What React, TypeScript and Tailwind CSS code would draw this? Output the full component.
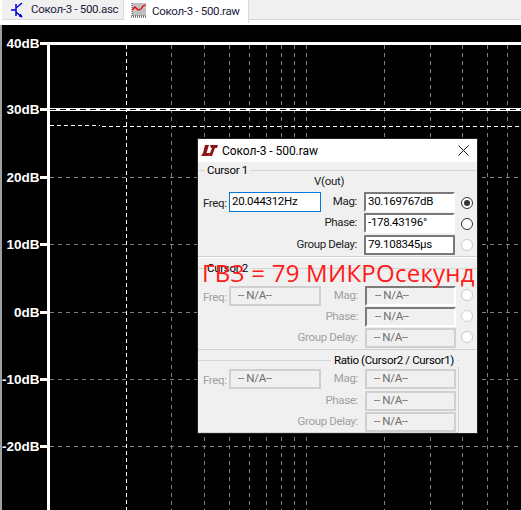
const uiFont = "[font-family:'Roboto','Noto_Sans',sans-serif]";

const gridX = [171, 204, 229, 249, 266, 281, 294, 306, 384, 430, 462, 487, 507];
const gridY = [177, 244, 312, 379, 446];
const axis = [
  { label: "40dB", y: 43 },
  { label: "30dB", y: 109 },
  { label: "20dB", y: 177 },
  { label: "10dB", y: 244 },
  { label: "0dB", y: 312 },
  { label: "-10dB", y: 379 },
  { label: "-20dB", y: 446 },
  { label: "-30dB", y: 514 },
];

function Chart() {
  return (
    <svg width="521" height="485" viewBox="0 25 521 485" className="block" shapeRendering="crispEdges">
      <rect x="0" y="25" width="521" height="485" fill="#000" />
      <rect x="0" y="25" width="2" height="485" fill="#a0a0a0" />
      {gridX.map((x) => (
        <line key={x} x1={x + 0.5} x2={x + 0.5} y1="45" y2="510" stroke="#808080" strokeDasharray="4 4" />
      ))}
      {gridY.map((y) => (
        <line key={y} x1="50" x2="521" y1={y + 0.5} y2={y + 0.5} stroke="#808080" strokeDasharray="4 4" />
      ))}
      <line x1="126.5" x2="126.5" y1="45" y2="510" stroke="#fff" strokeDasharray="4 3" />
      <rect x="47" y="42" width="474" height="3" fill="#fff" />
      <rect x="47" y="42" width="3" height="468" fill="#fff" />
      {/* cursor lines */}
      <rect x="50" y="108" width="471" height="3" fill="#fff" />
      <line x1="50" x2="521" y1="109.5" y2="109.5" stroke="#000" strokeDasharray="6 4" />
      <line x1="50" x2="100" y1="125.5" y2="125.5" stroke="#fff" strokeDasharray="4 3" />
      <line x1="102" x2="521" y1="126.5" y2="126.5" stroke="#fff" strokeDasharray="4 3" />
      {axis.map((a) => (
        <g key={a.label}>
          <rect x="40" y={a.y - 1} width="7" height="3" fill="#fff" />
          <text
            x="39.5"
            y={a.y + 5}
            textAnchor="end"
            fill="#fff"
            fontSize="13.5"
            fontWeight="700"
            fontFamily="'Liberation Sans', sans-serif"
            shapeRendering="auto"
          >
            {a.label}
          </text>
        </g>
      ))}
    </svg>
  );
}

function Tabs() {
  return (
    <div className={`flex h-[25px] bg-white pl-[2px] text-[11.5px] tracking-[-0.3px] whitespace-nowrap text-[#1a1a3a] ${uiFont}`}>
      <div className="flex h-[20px] w-[122px] items-center gap-[6px] border-r border-b border-[#d9d9d9] bg-[#f0f0f0] pl-[9px]">
        <svg width="14" height="16" viewBox="0 0 14 16" fill="none" stroke="#0000e0" strokeWidth="1.5" className="shrink-0">
          <path d="M0 8h5M5 2v12M5 6l6-5M5 10l6 5" />
          <path d="M11 15l-3-1 1.5-2z" fill="#0000e0" strokeWidth="1" />
        </svg>
        <span>Сокол-3 - 500.asc</span>
      </div>
      <div className="flex h-[23px] w-[125px] items-center gap-[5px] border-r border-[#d9d9d9] bg-white pl-[7px]">
        <svg width="16" height="16" viewBox="0 0 16 16" className="mb-[3px] shrink-0">
          <rect x="1" y="1" width="14" height="13" fill="#c0c0c0" />
          <path d="M1 1v13h14" fill="none" stroke="#404040" strokeDasharray="1 1" />
          <path d="M1 8l3-3 3 3 3-1 2-3 3-1" fill="none" stroke="#f00000" strokeWidth="1.3" />
          <path d="M0 15h16" stroke="#202020" strokeDasharray="1 1" />
        </svg>
        <span>Сокол-3 - 500.raw</span>
      </div>
      <div className="h-[20px] flex-1 border-b border-[#d9d9d9] bg-[#f0f0f0]" />
    </div>
  );
}

function Legend({ text }: { text: string }) {
  return (
    <div className="flex h-[12px] items-center">
      <div className="h-px w-[7px] bg-[#d5d5d5]" />
      <span className="px-[2px] text-[11.5px] leading-[12px] tracking-[-0.3px] text-black">{text}</span>
      <div className="h-px flex-1 bg-[#d5d5d5]" />
    </div>
  );
}

function Value({
  text,
  kind,
  width = "w-[91px]",
}: {
  text: string;
  kind: "focus" | "sunken" | "plain" | "off" | "offSunken";
  width?: string;
}) {
  const styles = {
    focus: "border border-[#0078d7] bg-white pl-[2px] text-black",
    sunken: "border-2 border-t-[#7a7a7a] border-l-[#7a7a7a] border-r-white border-b-white bg-white pl-[2px] text-black",
    plain: "border-2 border-[#7a7a7a] bg-white pl-[2px] text-black",
    off: "border-2 border-[#d0d0d0] bg-[#f0f0f0] pl-[7px] text-[#6d6d6d]",
    offSunken: "border-2 border-t-[#7a7a7a] border-l-[#7a7a7a] border-r-white border-b-white bg-[#f0f0f0] pl-[8px] text-[#6d6d6d]",
  };
  return (
    <div className={`flex h-[20px] items-center text-[11.5px] tracking-[-0.3px] ${width} ${styles[kind]}`}>{text}</div>
  );
}

function Radio({ state }: { state: "checked" | "empty" | "off" }) {
  return (
    <div
      className={`flex size-[12px] items-center justify-center rounded-full border bg-white ${
        state === "off" ? "border-[#cccccc]" : "border-[#333333]"
      }`}
    >
      {state === "checked" && <div className="size-[6px] rounded-full bg-[#333333]" />}
    </div>
  );
}

function Label({ text, off }: { text: string; off?: boolean }) {
  return <span className={`text-[11.5px] tracking-[-0.35px] ${off ? "text-[#a0a0a0]" : "text-[#222]"}`}>{text}</span>;
}

function Row({
  freq,
  name,
  children,
  off,
  className = "",
}: {
  freq?: React.ReactNode;
  name: string;
  children: React.ReactNode;
  off?: boolean;
  className?: string;
}) {
  return (
    <div className={`flex h-[20px] items-center ${className}`}>
      {freq && (
        <div className="flex items-center pl-[5px]">
          <div className="w-[23px] text-right">
            <Label text="Freq:" off={off} />
          </div>
          <div className="ml-[3px]">{freq}</div>
        </div>
      )}
      <div className="ml-auto flex items-center">
        <Label text={name} off={off} />
        <div className="ml-[7px]">{children}</div>
      </div>
    </div>
  );
}

function ReadingDialog() {
  return (
    <div className={`absolute top-[138px] left-[197px] flex h-[296px] w-[281px] flex-col border border-[#222] bg-[#f0f0f0] ${uiFont}`}>
      <div className="flex h-[23px] shrink-0 items-center bg-white pl-[3px]">
        <svg width="17" height="11" viewBox="0 0 17 11" fill="#8b1414">
          <path d="M4 0h4L5.5 8H9l-1 3H0l2-3z" />
          <path d="M9 0h8l-1 3h-2l-3 8H8l3-8h-1z" />
        </svg>
        <span className="ml-[4px] text-[12px] tracking-[-0.05px] text-black">Сокол-3 - 500.raw</span>
        <svg className="mr-[8px] ml-auto" width="11" height="11" viewBox="0 0 11 11" stroke="#111" fill="none">
          <path d="M0.5 0.5l10 10M10.5 0.5l-10 10" />
        </svg>
      </div>

      <div className="mt-[2px]">
        <Legend text="Cursor 1" />
      </div>
      <div className="h-[10px] pl-[116px] text-[11.5px] leading-[10px] tracking-[-0.3px] text-[#222]">V(out)</div>
      <div className="mt-[6px] flex flex-col gap-px pr-[22px]">
        <Row freq={<Value text="20.044312Hz" kind="focus" width="w-[92px]" />} name="Mag:">
          <Value text="30.169767dB" kind="sunken" />
        </Row>
        <Row name="Phase:">
          <Value text="-178.43196°" kind="sunken" />
        </Row>
        <Row name="Group Delay:" className="mt-px">
          <Value text="79.108345µs" kind="plain" />
        </Row>
      </div>

      <div className="mt-[1px] h-[2px] border-t border-[#d0d0d0] bg-white" />
      <div className="mt-[4px]">
        <Legend text="Cursor 2" />
      </div>
      <div className="mt-[12px] flex flex-col gap-px pr-[21px]">
        <Row off freq={<Value text="-- N/A--" kind="off" width="w-[92px]" />} name="Mag:">
          <Value text="-- N/A--" kind="offSunken" />
        </Row>
        <Row off name="Phase:">
          <Value text="-- N/A--" kind="offSunken" />
        </Row>
        <Row off name="Group Delay:">
          <Value text="-- N/A--" kind="off" />
        </Row>
      </div>

      <div className="mt-px h-px bg-[#d0d0d0]" />
      <div className="mt-[3px] mr-[18px] flex h-[14px] items-center">
        <div className="h-px flex-1 bg-[#d5d5d5]" />
        <span className="px-[3px] text-[11.5px] leading-[14px] tracking-[-0.35px] text-black">Ratio (Cursor2 / Cursor1)</span>
        <div className="h-px w-[2px] bg-[#d5d5d5]" />
      </div>
      <div className="mr-[18px] flex flex-1 flex-col gap-px border-r border-b border-[#d5d5d5] pt-[2px] pr-[2px]">
        <Row off freq={<Value text="-- N/A--" kind="off" width="w-[92px]" />} name="Mag:">
          <Value text="-- N/A--" kind="off" />
        </Row>
        <Row off name="Phase:" className="mt-px">
          <Value text="-- N/A--" kind="off" />
        </Row>
        <Row off name="Group Delay:">
          <Value text="-- N/A--" kind="off" />
        </Row>
      </div>

      {/* radios and the red note sit over the panel */}
      <div className="absolute top-[58px] left-[263px] flex flex-col gap-[9px]">
        <Radio state="checked" />
        <Radio state="empty" />
        <Radio state="off" />
      </div>
      <div className="absolute top-[150px] left-[263px] flex flex-col gap-[9px]">
        <Radio state="off" />
        <Radio state="off" />
        <Radio state="off" />
      </div>
      <span className="absolute top-[118px] left-[4px] [font-family:'Open_Sans',sans-serif] text-[24px] leading-[32px] tracking-[0.25px] whitespace-nowrap text-[#ff1a1a]">
        ГВЗ = 79 МИКРОсекунд
      </span>
    </div>
  );
}

export default function App() {
  return (
    <div className="relative h-[510px] w-[521px] overflow-hidden bg-black">
      <Tabs />
      <Chart />
      <ReadingDialog />
    </div>
  );
}
